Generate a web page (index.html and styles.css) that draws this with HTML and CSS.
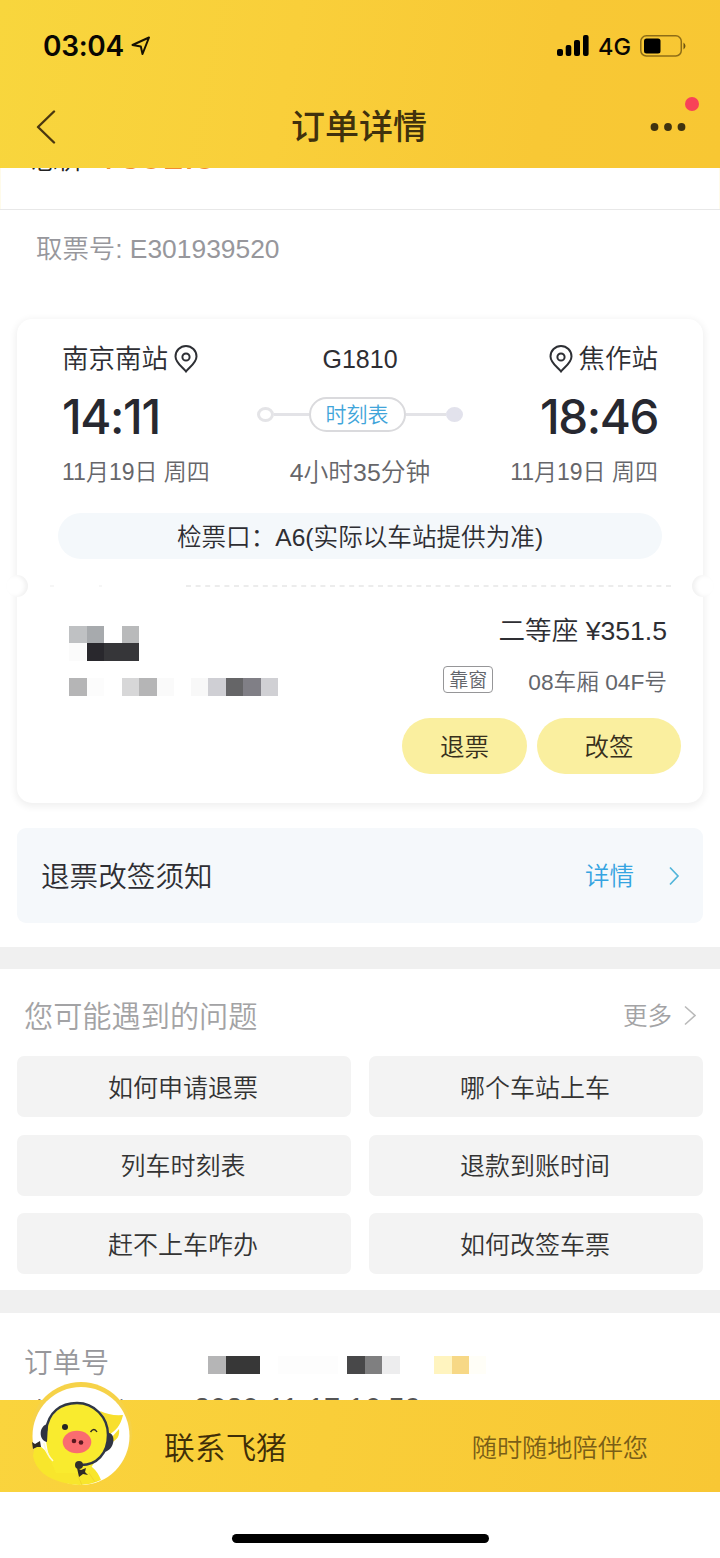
FILE: index.html
```
<!DOCTYPE html>
<html lang="zh-CN">
<head>
<meta charset="utf-8">
<title>订单详情</title>
<link rel="stylesheet" href="styles.css">
</head>
<body>
<div class="screen">
  <header class="header">
    <div class="status">
      <span class="clock">03:04</span>
      <svg class="locate" width="20" height="20" viewBox="0 0 20 20"><path d="M1.500 9 18 1.500 11.500 18 9.800 10.400Z" fill="none" stroke="#171102" stroke-width="2" stroke-linejoin="round"/></svg>
      <svg class="signal" width="32" height="22" viewBox="0 0 32 22"><rect x="0" y="14" width="6" height="7" rx="2"/><rect x="8.700" y="10" width="5.600" height="11" rx="2"/><rect x="17" y="5" width="6" height="16" rx="2"/><rect x="26" y="0" width="5.600" height="21" rx="2"/></svg>
      <span class="network">4G</span>
      <svg class="battery" width="47" height="22" viewBox="0 0 47 22"><rect x=".8" y=".8" width="40.500" height="20.200" rx="5.500" fill="none" stroke="#8e6d16" stroke-width="1.500"/><rect x="4" y="3.500" width="16.500" height="15" rx="2.500"/><path d="M43.500 7.500Q47.500 11 43.500 14.500Z" fill="#6d5310"/></svg>
    </div>
    <div class="nav">
      <svg width="20" height="34" viewBox="0 0 20 34"><path d="M18 1.500 2 17 18 32.500" fill="none" stroke="#4a3710" stroke-width="2.400" stroke-linecap="round" stroke-linejoin="round"/></svg>
      <h1 class="title">订单详情</h1>
      <div class="menu">
        <svg width="36" height="8" viewBox="0 0 36 8" fill="#40330f"><circle cx="4.500" cy="4" r="3.900"/><circle cx="18" cy="4" r="3.900"/><circle cx="31.500" cy="4" r="3.900"/></svg>
        <i class="alert"></i>
      </div>
    </div>
  </header>

  <section class="total"><div class="total-line"><span>总价</span><span class="total-price">¥351.5</span></div></section>
  <div class="pickup">取票号: E301939520</div>

  <section class="ticket">
    <i class="notch notch-left"></i><i class="notch notch-right"></i>
    <div class="trip">
      <div class="row stations">
        <div class="station"><span>南京南站</span><svg class="pin" width="24" height="28" viewBox="0 0 24 28"><path d="M12 26.500C9 22.500 1.500 18 1.500 11.500a10.500 10.500 0 0 1 21 0C22.500 18 15 22.500 12 26.500Z" fill="none" stroke="#2d2f34" stroke-width="2"/><circle cx="12" cy="12" r="3.600" fill="none" stroke="#2d2f34" stroke-width="2"/></svg></div>
        <div class="train">G1810</div>
        <div class="station end"><svg class="pin" width="24" height="28" viewBox="0 0 24 28"><path d="M12 26.500C9 22.500 1.500 18 1.500 11.500a10.500 10.500 0 0 1 21 0C22.500 18 15 22.500 12 26.500Z" fill="none" stroke="#2d2f34" stroke-width="2"/><circle cx="12" cy="12" r="3.600" fill="none" stroke="#2d2f34" stroke-width="2"/></svg><span>焦作站</span></div>
      </div>
      <div class="row times">
        <div class="time">14:11</div>
        <div class="route"><i class="stop"></i><i class="line"></i><span class="timetable">时刻表</span><i class="line line-end"></i><i class="stop stop-end"></i></div>
        <div class="time end">18:46</div>
      </div>
      <div class="row dates">
        <div>11月19日 周四</div>
        <div class="duration">4小时35分钟</div>
        <div class="end">11月19日 周四</div>
      </div>
    </div>
    <div class="gate">检票口：A6(实际以车站提供为准)</div>
    <svg class="divider" width="686" height="4" viewBox="0 0 686 4"><path d="M169 2H654" stroke="#e6e6e6" stroke-width="1.600" stroke-dasharray="5 4.600"/><path d="M33 2h4M82 2h3" stroke="#f3f3f3" stroke-width="1.500"/></svg>
    <div class="passenger">
      <svg class="masked" width="230" height="80" viewBox="0 0 230 80" shape-rendering="crispEdges">
        <rect x="0" y="6" width="17.500" height="17" fill="#bfc1c3"/><rect x="17.500" y="6" width="17.500" height="17" fill="#a7aaad"/><rect x="53" y="6" width="17" height="17" fill="#b9babb"/>
        <rect x="0" y="23" width="17" height="17.500" fill="#fbfbfb"/><rect x="18" y="23" width="17" height="18" fill="#29282d"/><rect x="35" y="23" width="35" height="18" fill="#363639"/>
        <rect x="0" y="58" width="18" height="18" fill="#b5b5b6"/><rect x="18" y="58" width="17" height="18" fill="#fcfcfc"/><rect x="53" y="58" width="17" height="18" fill="#d7d7d8"/><rect x="70" y="58" width="18" height="18" fill="#b5b5b6"/><rect x="88" y="58" width="17" height="18" fill="#fafafa"/><rect x="122" y="58" width="17" height="18" fill="#f8f8f8"/><rect x="139" y="58" width="18" height="18" fill="#cfcfd4"/><rect x="157" y="58" width="17" height="18" fill="#656567"/><rect x="174" y="58" width="18" height="18" fill="#807f86"/><rect x="192" y="58" width="17" height="18" fill="#d0d0d4"/>
      </svg>
      <div class="fare">
        <div class="seat">二等座 ¥351.5</div>
        <div class="place"><span class="tag">靠窗</span><span>08车厢 04F号</span></div>
      </div>
    </div>
    <div class="actions"><button class="action refund">退票</button><button class="action change">改签</button></div>
  </section>

  <section class="notice"><span>退票改签须知</span><span class="detail">详情</span><svg width="12" height="20" viewBox="0 0 12 20"><path d="M2 1.500 10 10 2 18.500" fill="none" stroke="#52b5da" stroke-width="1.700"/></svg></section>

  <section class="questions">
    <div class="questions-head"><span>您可能遇到的问题</span><span class="more">更多</span><svg width="12" height="21" viewBox="0 0 12 21"><path d="M1 1.500 11 10.500 1 19.500" fill="none" stroke="#bababa" stroke-width="1.600"/></svg></div>
    <div class="grid">
      <button class="question">如何申请退票</button><button class="question">哪个车站上车</button>
      <button class="question">列车时刻表</button><button class="question">退款到账时间</button>
      <button class="question">赶不上车咋办</button><button class="question">如何改签车票</button>
    </div>
  </section>

  <section class="order">
    <div class="order-number"><span>订单号</span>
      <svg class="order-mask" width="280" height="34" viewBox="0 0 280 34" shape-rendering="crispEdges"><rect x="0" y="8" width="18" height="18" fill="#b5b5b6"/><rect x="18" y="8" width="34" height="18" fill="#373737"/><rect x="70" y="8" width="60" height="18" fill="#fdfdfd"/><rect x="139" y="8" width="18" height="18" fill="#484849"/><rect x="157" y="8" width="17" height="18" fill="#7f7f80"/><rect x="174" y="8" width="18" height="18" fill="#ededee"/><rect x="226" y="8" width="18" height="18" fill="#fff4bf"/><rect x="244" y="8" width="17" height="18" fill="#f7d886"/><rect x="261" y="8" width="17" height="18" fill="#fffef7"/></svg>
    </div>
    <div class="order-date"><span class="date-label">付款时间</span><span>2020-11-17 16:59</span></div>
  </section>

  <footer class="contact">
    <svg class="avatar" width="100" height="106" viewBox="0 0 100 106">
      <circle cx="49" cy="52" r="51" fill="#f6d248"/>
      <ellipse cx="49" cy="55" rx="48.500" ry="49" fill="#fff"/>
      <path d="M68 30Q78 35 91 34C89 44 83 51 76 54ZM80 56l7-8c1 7-2 11-7 13Z" fill="#f8df2d"/>
      <path d="M3 63C9 64 13 69 17 75L50 80 60 86Q66 91 69 99 52 107 33 102C16 98 4 90 1 75Z" fill="#f8e62c"/>
      <ellipse cx="45" cy="54" rx="31" ry="32" fill="#f9eb2e"/>
      <path d="M14 60Q15 69 18 78L24 92 56 92 66 75Z" fill="#f9eb2e"/>
      <path d="M12 62Q14 73 21 80" fill="none" stroke="#fffad4" stroke-width="1.600"/>
      <path d="M14 50C16 31 29 22 45 22 62 22 76 36 76 54 76 72 65 85 47 84" fill="none" stroke="#303746" stroke-width="2.500"/>
      <path d="M16 43C7 44 6 59 15 61ZM77 52c7 1 6 16-4 19Z" fill="#303442"/>
      <circle cx="33" cy="46" r="3" fill="#252424"/>
      <path d="M58.500 51Q62 46 65 51" fill="none" stroke="#302d23" stroke-width="1.400"/>
      <ellipse cx="45" cy="61" rx="14.300" ry="11.300" fill="#fa6c70"/><circle cx="42" cy="60" r="2.300" fill="#5b1820"/><circle cx="49" cy="61.500" r="2.300" fill="#5b1820"/>
      <circle cx="47" cy="84" r="4" fill="#302f2b"/><path d="M0 61 3 63 8 60 9 66 5 66 1 68ZM45 87l4 2 5-2-1 4 3 3-5-1-4 3Z" fill="#302b26"/>
      <path d="M46 95 50 104M57 92 63 101" stroke="#edd02a" stroke-width=".8"/>
    </svg>
    <span class="contact-name">联系飞猪</span>
    <span class="contact-note">随时随地陪伴您</span>
  </footer>
  <div class="home-area"><i class="home"></i></div>
</div>
</body>
</html>
```
FILE: styles.css
```
* { box-sizing: border-box; }
body {
  margin: 0;
  background: #fff;
  color: #2e2e33;
  font-family: "Liberation Sans", "Noto Sans CJK SC", sans-serif;
  font-weight: 350;
}
button { border: 0; padding: 0; font: inherit; color: inherit; }
svg { flex: none; display: block; }
.screen { width: 720px; height: 1558px; display: flex; flex-direction: column; overflow: hidden; white-space: nowrap; }
.screen > * { flex: none; }

.header { position: relative; z-index: 1; height: 168px; background: linear-gradient(100deg, #f8d63d 0%, #f9cf3a 40%, #f8c835 75%, #f8c733 100%); }
.status { height: 88px; padding: 4px 33px 0 43px; display: flex; align-items: center; color: #090702; font-family: Inter, sans-serif; }
.clock { width: 81px; font-size: 28px; font-weight: 600; letter-spacing: -.3px; }
.locate { margin: -1px 0 0 7px; }
.signal { margin-left: auto; }
.network { margin: 1px 9px 0 9px; width: 33px; font-size: 23.500px; font-weight: 500; }
.nav { height: 76px; padding: 1px 33px 0 36px; display: grid; grid-template-columns: 60px 1fr 60px; align-items: center; }
.title { margin: 0; text-align: center; font-size: 34px; font-weight: 500; line-height: 50px; color: #40310d; padding-right: 5px; }
.menu { position: relative; display: flex; justify-content: flex-end; padding-right: 1px; }
.alert { position: absolute; right: -12px; top: -26px; width: 14px; height: 14px; border-radius: 50%; background: #f84258; }

.total { height: 42px; border: solid #e8e8e8; border-width: 0 0 1px; box-shadow: inset 1px 0 #fffbea, inset -1px 0 #fffbea; }
.total-line { margin-top: -36px; height: 48px; padding-left: 31px; display: flex; align-items: baseline; line-height: 48px; font-size: 26.500px; color: #222; }
.total-price { margin-left: 14px; font-size: 38.500px; color: #f08a35; }
.pickup { height: 109px; padding: 19px 36px 0; line-height: 40px; font-size: 26.400px; color: #97979c; }

.ticket { position: relative; height: 484px; margin: 0 17px; border-radius: 15px; background: #fff; box-shadow: 0 2px 7px 2px rgba(0,0,0,.06); }
.notch { position: absolute; top: 256px; width: 22px; height: 22px; border-radius: 50%; background: #fff; }
.notch-left { left: -11px; box-shadow: inset -3px 0 4px rgba(0,0,0,.06); }
.notch-right { right: -11px; box-shadow: inset 3px 0 4px rgba(0,0,0,.06); }
.trip { height: 194px; padding: 20px 45px 0; }
.row { display: grid; grid-template-columns: 1fr 206px 1fr; align-items: center; }
.end { justify-self: end; }
.stations { height: 40px; font-size: 26.500px; }
.station { display: flex; align-items: center; gap: 6px; }
.station span { margin-top: -5px; }
.train { text-align: center; font-size: 25px; }
.times { height: 70px; }
.time { font: 500 47.500px/70px Inter, sans-serif; letter-spacing: -1.400px; color: #272830; padding-top: 3px; }
.route { display: flex; align-items: center; margin-top: -2px; }
.stop { width: 17px; height: 15px; border: 3px solid #e4e4e7; border-radius: 50%; }
.stop-end { background: #e2e2ec; border-color: #e2e2ec; }
.line { width: 35px; height: 3px; background: #e3e3e7; }
.line-end { width: 41px; }
.timetable { width: 98px; height: 35px; border: 2px solid #dadadd; border-radius: 18px; text-align: center; line-height: 31px; font-size: 21px; color: #41a5da; }
.dates { height: 42px; font-size: 23px; color: #66666a; }
.duration { text-align: center; font-size: 24.800px; }
.gate { margin: 0 41px; height: 46px; border-radius: 23px; background: #f4f8fb; text-align: center; font-size: 24.600px; line-height: 49px; }
.divider { margin-top: 25px; }
.passenger { height: 112px; padding: 0 36px 0 52px; display: flex; justify-content: space-between; }
.masked { margin-top: 32px; }
.fare { padding-top: 22px; text-align: right; }
.seat { height: 42px; line-height: 42px; font-size: 26.600px; }
.place { height: 56px; display: flex; justify-content: flex-end; align-items: center; font-size: 22.700px; color: #64666c; }
.tag { width: 50px; height: 27px; margin: -1px 35px 0 0; border: 1px solid #969698; border-radius: 4px; font-size: 19px; line-height: 27px; text-align: center; }
.actions { margin-top: 18px; padding-right: 22px; display: flex; justify-content: flex-end; gap: 10px; }
.action { height: 56px; border-radius: 28px; background: #faef9f; font-size: 24.500px; color: #37301c; padding-bottom: 1px; }
.refund { width: 125px; }
.change { width: 144px; }

.notice { height: 95px; margin: 25px 17px 24px; padding: 0 23px 0 24px; border-radius: 9px; background: #f5f8fb; display: flex; align-items: center; font-size: 28.600px; }
.notice span { margin-top: -2px; }
.notice .detail { margin-left: auto; margin-right: 34px; color: #35a4e1; font-size: 24.500px; }
.questions { height: 343px; border-top: 22px solid #f0f0f0; padding: 0 17px; }
.questions-head { height: 87px; padding: 5px 7px 0; display: flex; align-items: center; font-size: 29.200px; color: #a3a3a5; }
.questions-head span { margin-top: -3px; }
.questions-head .more { margin: -1px 12px 0 auto; font-size: 24.500px; }
.grid { display: grid; grid-template-columns: 1fr 1fr; gap: 17.500px 18px; }
.question { height: 61px; border-radius: 7px; background: #f3f3f3; font-size: 25px; color: #333; padding: 0 2px 2px 0; }
.order { height: 110px; border-top: 23px solid #f0f0f0; }
.order-number { height: 84px; padding: 10px 24px 0; display: flex; align-items: center; font-size: 28.400px; color: #97979b; }
.order-mask { margin: 10px 0 0 99px; }
.order-date { height: 42px; padding: 0 30px; display: flex; font-size: 29px; line-height: 34px; color: #555; margin-top: -6px; }
.date-label { width: 164px; margin-top: 6px; }

.contact { position: relative; height: 92px; padding: 0 72px 0 164px; display: flex; align-items: center; justify-content: space-between; background: linear-gradient(100deg, #fad43d 0%, #f9ce39 45%, #f8c734 100%); }
.avatar { position: absolute; left: 32px; top: -19px; }
.contact-name { font-size: 30.700px; color: #3f2e08; margin-top: -2px; }
.contact-note { font-size: 25.200px; color: #795e17; }
.home-area { height: 66px; display: flex; justify-content: center; padding-top: 42px; }
.home { width: 257px; height: 9px; border-radius: 5px; background: #000; }
```
